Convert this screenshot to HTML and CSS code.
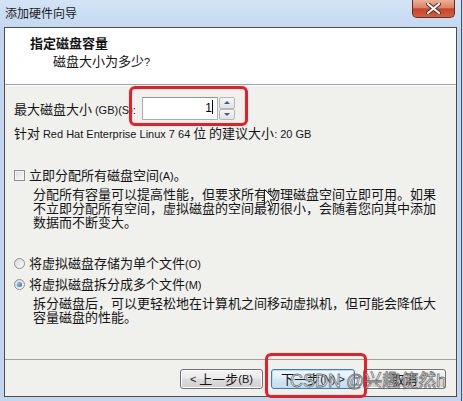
FILE: index.html
```html
<!DOCTYPE html>
<html lang="zh-CN">
<head>
    <meta charset="UTF-8">
    <meta name="viewport" content="width=device-width, initial-scale=1.0">
    <title>添加硬件向导</title>
    <link rel="stylesheet" href="styles.css">
</head>
<body>
    <div class="window">
        <div class="titlebar">
            <span class="title">添加硬件向导</span>
            <div class="close-btn">
                <svg width="15" height="11" viewBox="0 0 15 11">
                    <path d="M2 1 L13 10 M13 1 L2 10" stroke="#5a2418" stroke-width="4" stroke-linecap="round"/>
                    <path d="M2 1 L13 10 M13 1 L2 10" stroke="#fff" stroke-width="2.2" stroke-linecap="round"/>
                </svg>
            </div>
        </div>

        <div class="client">
            <div class="header">
                <div class="header-title">指定磁盘容量</div>
                <div class="header-sub">磁盘大小为多少<span class="en">?</span></div>
            </div>

            <div class="content">
                <div class="size-row">
                    <span class="size-label">最大磁盘大小 <span class="en">(GB)(S):</span></span>
                    <div class="spin">
                        <div class="spin-input">1<span class="caret"></span></div>
                        <div class="spin-buttons">
                            <div class="spin-btn up"></div>
                            <div class="spin-btn down"></div>
                        </div>
                    </div>
                </div>
                <div class="hint">针对 <span class="en">Red Hat Enterprise Linux 7 64</span> 位 的建议大小<span class="en">: 20 GB</span></div>

                <div class="option check-row">
                    <span class="checkbox"></span>
                    <span>立即分配所有磁盘空间<span class="en">(A)</span>。</span>
                </div>
                <div class="desc">分配所有容量可以提高性能，但要求所有物理磁盘空间立即可用。如果<br>不立即分配所有空间，虚拟磁盘的空间最初很小，会随着您向其中添加<br>数据而不断变大。</div>

                <div class="option radio-row first">
                    <span class="radio"></span>
                    <span>将虚拟磁盘存储为单个文件<span class="en">(O)</span></span>
                </div>
                <div class="option radio-row">
                    <span class="radio checked"></span>
                    <span>将虚拟磁盘拆分成多个文件<span class="en">(M)</span></span>
                </div>
                <div class="desc">拆分磁盘后，可以更轻松地在计算机之间移动虚拟机，但可能会降低大<br>容量磁盘的性能。</div>
            </div>

            <div class="footer">
                <div class="btn"><span class="en">&lt;</span>&nbsp;上一步<span class="en">(B)</span></div>
                <div class="btn btn-default">下一步<span class="en">(N) &gt;</span></div>
                <div class="btn">取消</div>
            </div>
        </div>
    </div>

    <!-- annotation overlays -->
    <div class="mark mark-size"></div>
    <div class="mark mark-next"></div>
    <svg class="cursor" width="12" height="19" viewBox="0 0 12 19">
        <path d="M0.5 0.5 L0.5 15 L4 11.6 L6.6 17.8 L8.8 16.8 L6.3 10.8 L11 10.8 Z" fill="#fff" stroke="#222" stroke-width="1"/>
    </svg>
    <div class="watermark">CSDN @兴趣使然h</div>
</body>
</html>
```

FILE: styles.css
```css
body {
    margin: 0;
    width: 463px;
    height: 401px;
    overflow: hidden;
    position: relative;
    background: #c3d8f0;
    font-family: "Noto Sans CJK SC", sans-serif;
    font-size: 13px;
    color: #151515;
}
.en {
    font-family: "Liberation Sans", Arial, sans-serif;
    font-size: 11px;
}
.window {
    display: flex;
    flex-direction: column;
    width: 462px;
    height: 401px;
    box-sizing: border-box;
    border-right: 1px solid #4a5563;
    background: linear-gradient(#d4e3f5, #c2d7ef 30px);
}
.titlebar {
    height: 27px;
    display: flex;
    justify-content: space-between;
    align-items: flex-start;
    padding: 0 6px 0 5px;
    flex-shrink: 0;
}
.title {
    font-size: 12px;
    line-height: 26px;
    color: #1b1b1b;
}
.close-btn {
    width: 43px;
    height: 18px;
    box-sizing: border-box;
    border: 1px solid #6b2b1c;
    border-top: none;
    border-radius: 0 0 5px 5px;
    background: linear-gradient(#eab09b, #dc8366 45%, #c7442a 52%, #d45f3f);
    display: flex;
    align-items: center;
    justify-content: center;
}
.client {
    flex: 1;
    display: flex;
    flex-direction: column;
    margin: 0 4px 4px 4px;
    border: 1px solid #4d4d4d;
    background: #f0f0ed;
}
.header {
    height: 57px;
    box-sizing: border-box;
    padding: 6px 0 0 25px;
    background: #fff;
    border-bottom: 1px solid #a0a0a0;
    box-shadow: 0 1px 0 #fff;
    flex-shrink: 0;
}
.header-title {
    font-weight: bold;
    line-height: 18px;
}
.header-sub {
    margin-left: 23px;
    line-height: 18px;
}
.content {
    flex: 1;
    padding: 12px 0 0 9px;
}
.size-row {
    display: flex;
    align-items: center;
    height: 23px;
}
.size-label {
    width: 128px;
}
.spin {
    display: flex;
}
.spin-input {
    width: 76px;
    height: 23px;
    box-sizing: border-box;
    border: 1px solid #abadb3;
    border-top-color: #8e9299;
    background: #fff;
    text-align: right;
    padding-right: 4px;
    font-family: "Liberation Sans", Arial, sans-serif;
    font-size: 12px;
    line-height: 21px;
    color: #000;
}
.caret {
    display: inline-block;
    width: 1px;
    height: 14px;
    background: #000;
    vertical-align: -2px;
}
.spin-buttons {
    display: flex;
    flex-direction: column;
    width: 16px;
    height: 23px;
    margin-left: 1px;
}
.spin-btn {
    flex: 1;
    border: 1px solid #b4b6bb;
    border-radius: 2px;
    background: linear-gradient(#f6f6f6, #e2e2e2);
    display: flex;
    align-items: center;
    justify-content: center;
}
.spin-btn.up::after {
    content: "";
    border-left: 3px solid transparent;
    border-right: 3px solid transparent;
    border-bottom: 3px solid #3f5b7c;
}
.spin-btn.down::after {
    content: "";
    border-left: 3px solid transparent;
    border-right: 3px solid transparent;
    border-top: 3px solid #3f5b7c;
}
.hint {
    margin-top: 5px;
    line-height: 16px;
}
.option {
    display: flex;
    align-items: center;
    line-height: 16px;
}
.check-row {
    margin-top: 25px;
}
.radio-row {
    margin-top: 4px;
}
.radio-row.first {
    margin-top: 26px;
}
.checkbox {
    width: 11px;
    height: 11px;
    box-sizing: border-box;
    border: 1px solid #8f8f8f;
    background: linear-gradient(135deg, #dcdcdc, #fbfbfb);
    box-shadow: inset 0 0 0 1px #f4f4f4;
    margin-right: 4px;
}
.radio {
    width: 11px;
    height: 11px;
    box-sizing: border-box;
    border: 1px solid #8f8f8f;
    border-radius: 50%;
    background: linear-gradient(135deg, #d8d8d8, #fbfbfb);
    margin-right: 4px;
    display: flex;
    align-items: center;
    justify-content: center;
}
.radio.checked::after {
    content: "";
    width: 5px;
    height: 5px;
    border-radius: 50%;
    background: radial-gradient(circle at 35% 35%, #8cc2f0, #1d5fa8);
}
.desc {
    margin: 3px 0 0 19px;
    line-height: 14px;
    white-space: nowrap;
}
.footer {
    height: 37px;
    box-sizing: border-box;
    border-top: 1px solid #a0a0a0;
    display: flex;
    justify-content: flex-end;
    gap: 8px;
    padding: 9px 10px 0 0;
    flex-shrink: 0;
}
.btn {
    width: 83px;
    height: 20px;
    box-sizing: border-box;
    border: 1px solid #707070;
    border-radius: 3px;
    background: linear-gradient(#f4f4f4, #ebebeb 45%, #dddddd 50%, #cfcfcf);
    box-shadow: inset 0 0 0 1px #fcfcfc;
    display: flex;
    align-items: center;
    justify-content: center;
    line-height: 16px;
    white-space: nowrap;
}
.btn-default {
    width: 84px;
    border-color: #3c7fb1;
    background: linear-gradient(#f2f8fc, #e3eff9 45%, #d3e7f6 50%, #c6def2);
    box-shadow: inset 0 0 0 1px #b9dcf6;
}
.mark {
    position: absolute;
    box-sizing: border-box;
    border: 3px solid #ec1c24;
    border-radius: 6px;
}
.mark-size {
    left: 129px;
    top: 86px;
    width: 119px;
    height: 40px;
}
.mark-next {
    left: 265px;
    top: 353px;
    width: 102px;
    height: 45px;
}
.cursor {
    position: absolute;
    left: 264px;
    top: 189px;
}
.watermark {
    position: absolute;
    left: 290px;
    top: 370px;
    font-family: "Liberation Sans", "Noto Sans CJK SC", sans-serif;
    font-size: 18px;
    line-height: 22px;
    color: rgba(255, 255, 255, 0.75);
    -webkit-text-stroke: 0.8px rgba(60, 60, 60, 0.7);
    white-space: nowrap;
}
```
